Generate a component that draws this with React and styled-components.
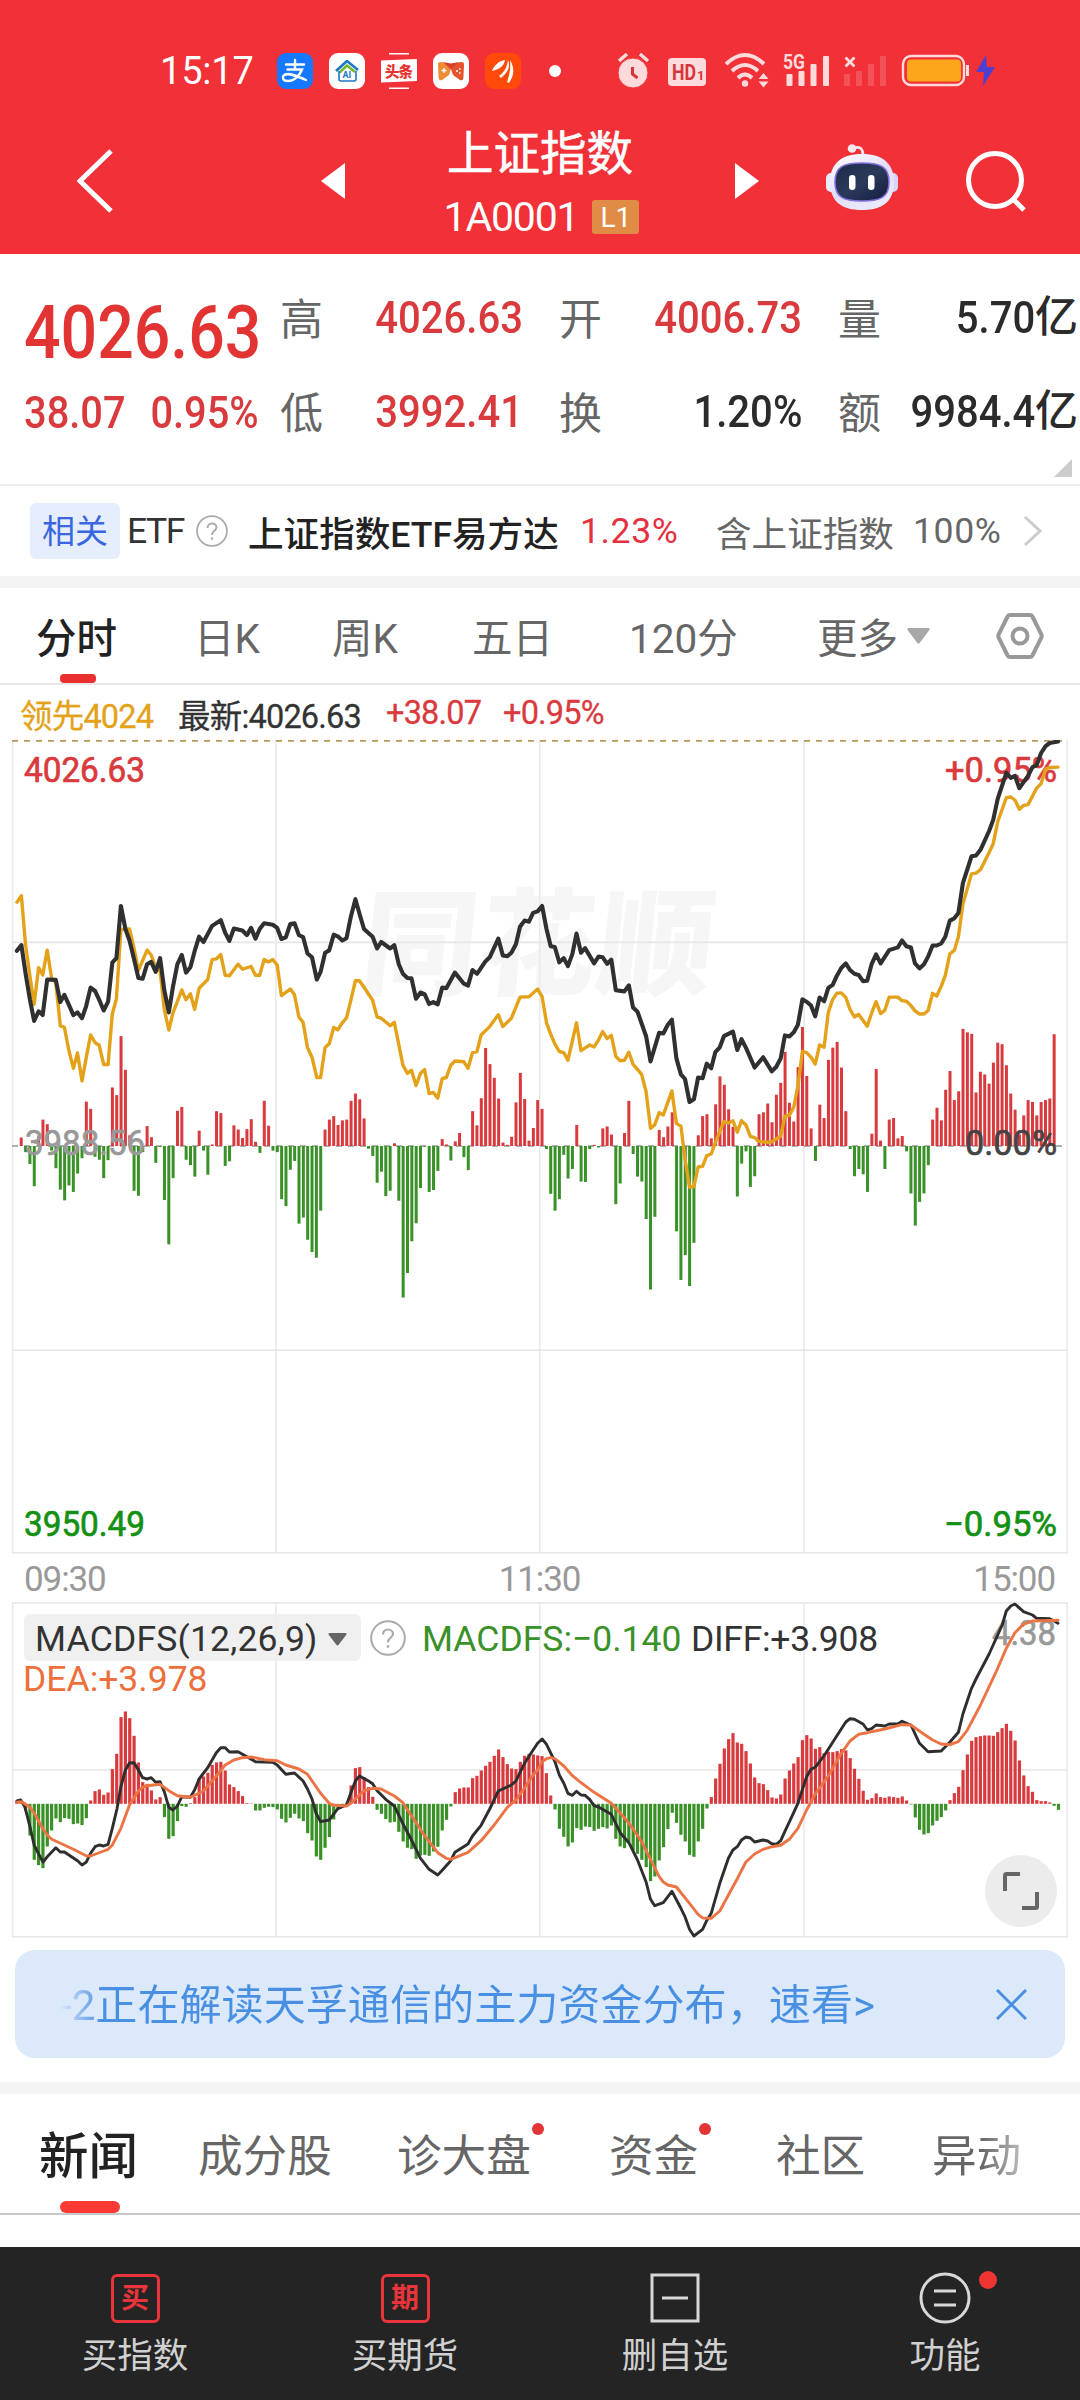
import styled, { createGlobalStyle, css } from "styled-components";

const GlobalStyle = createGlobalStyle`
  * {
    box-sizing: border-box;
  }
  body {
    margin: 0;
    background: #fff;
    font-family: Roboto, "Noto Sans CJK SC", sans-serif;
    color: #333;
  }
  svg {
    display: block;
    flex: none;
  }
`;

const RED = "#d93a3d";
const GREEN = "#3a9128";

const Screen = styled.div`
  width: 1080px;
  height: 2400px;
  display: flex;
  flex-direction: column;
  overflow: hidden;
  white-space: nowrap;
`;

/* ---------- header ---------- */

const Header = styled.header`
  height: 254px;
  background: #f13037;
  color: #fff;
`;

const StatusBar = styled.div`
  height: 108px;
  padding: 34px 0 0 160px;
  display: flex;
  align-items: center;
`;

const Clock = styled.span`
  width: 117px;
  font-size: 38px;
  letter-spacing: -0.2px;
`;

const AppIcons = styled.div`
  display: flex;
  align-items: center;
  gap: 16px;
  width: 341px;
`;

const TitleBar = styled.div`
  height: 146px;
  display: grid;
  grid-template-columns: 77px 243px 100px 240px 75px 90px 139px 116px;
  align-items: center;
`;

const TitleBlock = styled.div`
  display: flex;
  flex-direction: column;
  align-items: center;
  padding-top: 7px;
`;

const Title = styled.h1`
  margin: 0;
  font-size: 46.5px;
  font-weight: 400;
  line-height: 64px;
  -webkit-text-stroke: 0.6px #fff;
`;

const Code = styled.div`
  display: flex;
  align-items: center;
  gap: 14px;
  font-size: 41px;
  line-height: 62px;
  letter-spacing: -1.2px;
  padding-left: 3px;
`;

const Level = styled.span`
  width: 47px;
  height: 34px;
  border-radius: 3px;
  background: #e18c46;
  font-size: 28px;
  line-height: 35px;
  text-align: center;
  letter-spacing: 0;
`;

/* ---------- quote ---------- */

const Quote = styled.section`
  height: 232px;
  padding: 16px 0 0 24px;
  border-bottom: 2px solid #ececec;
  display: grid;
  grid-template-columns: 256px 243px 243px 242px;
  grid-template-rows: 94px 94px;
  align-items: center;
`;

const Price = styled.div`
  font-size: 74px;
  font-weight: 500;
  color: #e33434;
  padding-top: 30px;
  transform: scaleX(0.87);
  transform-origin: left;
`;

const Change = styled.div`
  display: flex;
  gap: 28px;
  font-size: 45px;
  color: ${RED};
  font-weight: 500;
  transform: scaleX(0.885);
  transform-origin: left;
  padding-top: 3px;
`;

const Stat = styled.div`
  display: flex;
  justify-content: space-between;
  align-items: center;
  margin-left: ${(props) => props.$shift}px;
  margin-right: -${(props) => props.$shift}px;
`;

const StatLabel = styled.span`
  font-size: 43px;
  color: #666;
  position: relative;
  top: -1px;
`;

const StatValue = styled.span`
  display: flex;
  align-items: center;
  font-size: 45px;
  font-weight: 500;
  padding-top: 1px;
  color: ${(props) => (props.$up ? RED : "#2b2b2b")};
`;

const Digits = styled.span`
  transform: scaleX(0.89);
  transform-origin: right;
`;

const Unit = styled.span`
  font-size: 43px;
  line-height: 53px;
  margin-right: 2px;
`;

const Corner = styled.div`
  grid-column: 1 / -1;
  width: 18px;
  height: 18px;
  margin-left: 1030px;
  margin-bottom: 6px;
  background: #ccc;
  clip-path: polygon(100% 0, 100% 100%, 0 100%);
`;

const Related = styled.section`
  height: 90px;
  padding-left: 30px;
  display: grid;
  grid-template-columns: 97px 69px 52px 332px 136px 197px 110px 30px;
  align-items: center;
  font-size: 35.6px;
  color: #666;
`;

const Tag = styled.span`
  width: 90px;
  height: 56px;
  border-radius: 6px;
  background: #e6eefd;
  color: #3a66e0;
  font-size: 33px;
  line-height: 57px;
  text-align: center;
`;

const RelatedText = styled.span`
  color: ${(props) => props.$color || "#666"};
  font-weight: ${(props) => props.$weight || 400};
  letter-spacing: ${(props) => props.$spacing || 0}px;
`;

const Band = styled.div`
  height: 12px;
  background: #f4f4f4;
  flex: none;
`;

/* ---------- tabs ---------- */

const Tabs = styled.nav`
  height: 97px;
  padding-left: 36px;
  border-bottom: 2px solid #e8e8e8;
  display: grid;
  grid-template-columns: 158px 138px 140px 157px 188px 179px auto;
  align-items: stretch;
`;

const Tab = styled.div`
  position: relative;
  display: flex;
  align-items: center;
  gap: 9px;
  font-size: 40.5px;
  color: ${(props) => (props.$active ? "#222" : "#666")};
  font-weight: ${(props) => (props.$active ? 500 : 400)};

  ${(props) =>
    props.$active &&
    css`
      &::after {
        content: "";
        position: absolute;
        left: 24px;
        bottom: 0;
        width: 36px;
        height: 9px;
        border-radius: 4px;
        background: #ea2f2f;
      }
    `}
`;

const Latest = styled.div`
  height: 55px;
  padding: 1px 0 0 20px;
  display: grid;
  grid-template-columns: 158px 208px 117px auto;
  align-items: center;
  font-size: 32.5px;
`;

const LatestItem = styled.span`
  color: ${(props) => props.$color};
  letter-spacing: -0.8px;
  -webkit-text-stroke: 0.3px ${(props) => props.$color};
`;

/* ---------- charts ---------- */

const ChartBox = styled.div`
  position: relative;
  height: ${(props) => props.$height}px;
  flex: none;
`;

const TimeAxis = styled.div`
  height: 44px;
  padding: 2px 25px 0 24px;
  display: flex;
  justify-content: space-between;
  align-items: center;
  font-size: 35px;
  letter-spacing: -1.1px;
  color: #999;
`;

const Indicators = styled.div`
  position: absolute;
  top: 14px;
  left: 24px;
  display: grid;
  grid-template-columns: 346px 52px 269px auto;
  align-items: center;
  height: 47px;
  font-size: 35.5px;
`;

const Picker = styled.div`
  width: 337px;
  height: 47px;
  padding: 3px 14px 0 11px;
  border-radius: 6px;
  background: rgba(236, 236, 236, 0.8);
  display: flex;
  justify-content: space-between;
  align-items: center;
  letter-spacing: 0.2px;
`;

const Reading = styled.span`
  color: ${(props) => props.$color};
  letter-spacing: ${(props) => props.$spacing}px;
  padding-top: 3px;
`;

const Dea = styled.div`
  position: absolute;
  top: 58px;
  left: 23px;
  font-size: 35.5px;
  letter-spacing: 0;
  color: #ec6f3c;
`;

const Expand = styled.button`
  position: absolute;
  left: 985px;
  top: 255px;
  width: 72px;
  height: 72px;
  padding: 0;
  border: none;
  border-radius: 50%;
  background: #ececec;
  display: flex;
  align-items: center;
  justify-content: center;
`;

/* ---------- banner and news ---------- */

const Banner = styled.div`
  height: 108px;
  margin: 10px 15px 24px;
  padding: 0 38px 0 45px;
  border-radius: 20px;
  background: #dbe9fb;
  display: flex;
  align-items: center;
  justify-content: space-between;
  flex: none;
`;

const BannerText = styled.span`
  font-size: 42.1px;
  line-height: 60px;
  padding-top: 4px;
  background: linear-gradient(90deg, #dbe9fb 0, #4a90e2 42px);
  background-clip: text;
  color: transparent;
`;

const NewsTabs = styled.nav`
  height: 121px;
  padding-left: 39px;
  border-bottom: 2px solid #c8c8c8;
  display: grid;
  grid-template-columns: 159px 199px 212px 167px 156px auto;
  flex: none;
`;

const NewsTab = styled.div`
  position: relative;
  display: flex;
  align-items: center;
  justify-self: start;
  padding-bottom: 2px;
  font-size: ${(props) => (props.$active ? 49.5 : 44.6)}px;
  font-weight: ${(props) => (props.$active ? 500 : 400)};
  color: ${(props) => (props.$active ? "#222" : "#666")};

  ${(props) =>
    props.$active &&
    css`
      &::after {
        content: "";
        position: absolute;
        left: 21px;
        bottom: 0;
        width: 60px;
        height: 12px;
        border-radius: 6px;
        background: #fc3a34;
      }
    `}

  ${(props) =>
    props.$fade &&
    css`
      background: linear-gradient(90deg, #666 55%, #bbb 100%);
      background-clip: text;
      color: transparent;
    `}
`;

const NewsDot = styled.i`
  position: absolute;
  right: -13px;
  top: 29px;
  width: 12px;
  height: 12px;
  border-radius: 50%;
  background: #e23434;
`;

const Spacer = styled.div`
  flex: 1;
`;

/* ---------- bottom bar ---------- */

const BottomBar = styled.footer`
  height: 153px;
  background: #242424;
  color: #d0d0d0;
  display: grid;
  grid-template-columns: repeat(4, 1fr);
  flex: none;
`;

const Action = styled.div`
  display: flex;
  flex-direction: column;
  align-items: center;
  padding-top: 24px;
  font-size: 35.5px;
  line-height: 52px;
`;

const ActionIcon = styled.div`
  position: relative;
  height: 54px;
  margin-bottom: 5px;
  display: flex;
  align-items: center;
`;

const StampIcon = styled.div`
  width: 49px;
  height: 49px;
  border: 3px solid #e8343a;
  border-radius: 6px;
  color: #e8343a;
  font-size: 28px;
  line-height: 43px;
  font-weight: 700;
  text-align: center;
`;

const ActionDot = styled.i`
  position: absolute;
  right: -26px;
  top: 0;
  width: 18px;
  height: 18px;
  border-radius: 50%;
  background: #f03434;
`;

/* ---------- data ---------- */

const FLOW = [
  0, 22, -16, -47, -105, 25, 69, 57, -12, -58, -114, -142, -103, -120, -72, -32, 116, 97, -28, -36,
  -84, -37, 153, 133, 287, 199, 28, -117, -130, -16, 52, 23, -44, -2, -141, -257, -84, 92, 102, -36,
  -50, -80, 40, -12, -75, 4, 91, 86, -52, -40, 54, 43, 21, 44, 70, 11, -18, 118, 53, -12,
  -16, -139, -157, -62, -39, -203, -187, -245, -277, -292, -169, 43, 69, 78, 55, 67, 69, 118, 137, 122,
  72, -7, -26, -96, -67, -131, -117, 7, -143, -396, -332, -249, -202, -110, -2, -120, -115, -65, 18, 4,
  -38, 12, 34, -29, -63, 91, 54, 125, 256, 214, 178, 124, 9, 3, 24, 114, 191, 123, 14, 47,
  120, 97, -8, -125, -169, -139, -23, -85, -60, 55, -93, -94, -8, 3, -4, 46, 51, 30, -152, -98,
  34, 118, -21, -80, -93, -191, -375, -185, 42, 23, 51, 88, -223, -350, -285, -366, -253, 28, 78, 83,
  20, 109, 182, 160, 96, 50, -132, -46, -14, -107, -79, 83, 88, 111, 62, 134, 165, 246, 113, 64,
  206, 311, 183, 46, -39, 108, 73, 225, 257, 272, 205, 91, -8, -79, -60, -74, -120, 32, 201, 14,
  -60, 69, 73, 20, 26, -14, -124, -208, -146, -124, -50, 69, 100, 67, 147, 196, 120, 143, 306, 297,
  293, 140, 194, 187, 163, 218, 270, 266, 211, 137, 95, 30, 80, 120, 115, 80, 115, 120, 124, 292,
];

const MACD = [
  8, 8, -20, -95, -168, -184, -193, -128, -80, -44, -55, -43, -45, -61, -59, -64, -43, 10, 38, 43,
  27, 34, 104, 150, 260, 277, 257, 204, 124, 65, 60, 40, 13, 20, -40, -105, -97, -52, -7, -9,
  2, 20, 76, 82, 93, 117, 124, 126, 100, 58, 50, 38, 23, 2, 1, -20, -20, -12, -9, -10,
  -17, -45, -56, -42, -30, -44, -52, -88, -110, -158, -168, -132, -100, -47, -14, -10, 3, 55, 107, 110,
  80, 50, 21, -18, -30, -46, -56, -54, -84, -113, -132, -136, -165, -155, -153, -156, -143, -129, -80, -48,
  -8, 35, 46, 49, 49, 77, 84, 100, 114, 126, 144, 163, 140, 119, 106, 104, 126, 144, 150, 148,
  145, 143, 92, 25, -17, -75, -99, -128, -116, -73, -78, -68, -70, -81, -75, -70, -74, -65, -105, -128,
  -133, -115, -140, -150, -168, -190, -232, -218, -170, -130, -76, -27, -57, -93, -113, -153, -159, -113, -75, -14,
  20, 76, 120, 166, 194, 212, 184, 180, 158, 121, 79, 62, 59, 41, 19, 16, 28, 76, 100, 121,
  140, 191, 206, 196, 165, 170, 152, 156, 155, 158, 164, 160, 137, 105, 75, 39, 12, 17, 31, 20,
  18, 22, 20, 18, 22, 10, -2, -41, -78, -92, -88, -65, -51, -40, -20, 11, 32, 51, 101, 148,
  189, 200, 203, 205, 205, 204, 215, 227, 240, 219, 190, 130, 85, 53, 36, 11, 8, 8, 4, -6,
  -18,
];

// each series is split into its morning and afternoon session
const INDEX = [
  "49,577 62,562 75,640 87,705 99,760 112,735 124,745 137,652 162,653 175,711 187,692 200,718 213,745 225,738 238,753 250,722 263,673 276,682 288,705 301,733 314,710 326,608 338,596 351,460 364,520 376,550 389,598 402,648 414,650 427,612 439,606 452,632 465,596 477,680 490,738 502,672 515,612 528,588 540,634 553,620 565,578 578,540 591,554 616,512 641,497 654,530 666,551 679,519 704,524 717,536 729,517 742,545 754,520 767,505 792,509 805,517 817,546 830,542 843,507 855,505 868,536 880,541 893,584 906,594 920,652 931,632 944,582 956,576 969,535 981,539 994,550 1006,544 1019,487 1032,442 1044,480 1057,520 1082,540 1095,571 1107,554 1133,571 1145,562 1158,612 1170,637 1183,648 1195,649 1208,702 1221,686 1233,690 1246,716 1258,711 1271,717 1284,673 1296,675 1321,634 1347,663 1359,668 1372,627 1385,637 1410,604 1422,594 1447,545 1460,589 1473,591 1485,582 1498,560 1510,514 1523,498 1536,501 1548,478 1561,474",
  "6,460 19,520 31,565 43,567 56,607 69,596 81,617 94,585 106,532 119,582 131,570 157,610 170,592 182,594 195,611 207,600 220,680 245,683 258,667 270,725 283,736 308,800 321,866 346,791 358,793 371,770 383,757 396,858 409,900 421,912 434,972 447,965 459,908 472,910 484,872 497,884 509,842 522,829 534,800 560,788 573,836 585,808 598,830 623,882 648,855 673,892 686,880 699,858 711,798 724,801 737,790 749,770 762,704 774,710 787,720 799,748 812,699 825,709 837,674 850,666 862,642 875,622 888,610 900,627 913,637 925,640 938,656 950,655 963,612 976,586 989,610 1014,575 1039,568 1051,550 1064,565 1077,568 1089,610 1102,623 1115,612 1127,592 1140,563 1152,563 1165,558 1177,540 1190,498 1203,492 1215,478 1228,400 1253,330 1266,328 1279,313 1304,264 1316,235 1329,180 1354,112 1367,125 1379,120 1392,152 1417,120 1430,97 1442,92 1455,60 1468,42 1480,34 1504,30",
];

const LEAD = [
  "49,450 62,433 74,560 87,645 99,717 112,621 124,640 137,575 150,650 162,660 175,773 187,777 200,838 213,884 225,844 238,917 250,858 263,797 276,817 288,824 301,874 314,874 326,742 338,702 351,521 376,520 389,570 402,628 427,575 439,588 452,620 465,630 477,730 490,784 502,740 528,679 540,705 553,689 565,730 578,675 603,652 616,600 628,598 641,587 654,641 666,642 691,612 704,625 729,618 742,641 754,641 767,600 780,606 792,600 805,614 817,694 843,677 855,692 868,750 880,764 893,830 906,855 920,908 931,908 944,830 956,820 969,777 981,783 994,765 1006,752 1019,706 1032,655 1044,655 1057,672 1082,706 1095,750 1107,753 1133,773 1145,764 1158,822 1170,876 1183,897 1195,889 1208,929 1221,897 1233,887 1246,950 1258,947 1271,962 1284,911 1296,908 1309,876 1321,865 1347,867 1359,884 1372,843 1385,840 1397,797 1422,775 1447,744 1460,775 1485,753 1510,698 1536,697 1561,677",
  "6,697 19,765 31,795 43,820 56,840 69,843 81,863 106,765 119,838 144,823 157,828 170,810 182,788 195,806 207,798 220,853 233,864 245,863 258,842 270,873 295,900 308,945 321,1041 333,1032 346,1000 358,1006 383,943 396,1028 409,1035 421,1120 434,1195 447,1193 459,1142 472,1140 484,1112 497,1108 509,1078 534,1023 547,1027 560,1021 573,1051 585,1021 598,1032 611,1062 623,1065 635,1075 661,1077 673,1076 699,1061 711,1009 724,1007 737,985 749,930 762,840 774,843 787,855 799,873 812,823 825,829 837,738 850,704 862,688 875,687 888,699 900,730 913,750 925,743 950,774 963,740 976,710 989,741 1001,733 1014,698 1039,698 1051,707 1064,709 1077,720 1089,734 1102,742 1115,742 1127,733 1140,688 1152,695 1165,670 1177,641 1190,585 1203,576 1215,540 1228,455 1253,376 1266,374 1279,365 1304,320 1316,297 1329,240 1354,177 1367,175 1379,183 1392,207 1404,197 1417,195 1442,152 1455,140 1468,102 1480,98 1504,97",
];

const DIFF = [
  "49,633 60,630 72,650 87,710 99,765 112,792 125,816 140,797 162,773 175,786 187,786 200,795 225,812 238,825 250,817 263,790 276,770 288,765 301,768 314,763 326,715 340,655 351,590 364,540 376,519 389,518 402,540 414,563 427,567 439,563 452,577 465,575 477,605 490,652 502,660 515,648 528,620 553,622 565,600 578,567 603,533 628,488 641,473 654,473 666,486 691,485 717,500 742,515 767,516 792,517 805,525 830,553 855,549 880,573 893,597 906,627 918,670 931,695 956,690 981,656 1006,645 1019,608 1032,573 1044,558 1070,573 1082,581 1095,602 1120,628 1145,648 1170,701 1195,750 1221,805 1246,838 1271,855 1284,841 1309,812 1321,787 1359,762 1372,738 1397,706 1422,657 1447,603 1485,585 1498,573 1523,520 1548,480 1561,460",
  "6,447 19,463 43,514 56,555 69,580 81,610 94,616 106,604 119,615 131,616 144,628 157,647 170,651 207,673 233,728 258,758 283,810 308,876 321,928 333,947 358,938 383,904 409,955 421,980 434,1018 447,1038 472,1018 484,992 497,970 522,880 547,805 560,780 573,770 585,750 598,741 611,744 623,756 648,750 661,753 673,761 686,763 699,752 711,724 737,667 749,640 774,560 787,538 799,532 825,497 862,437 888,396 900,386 913,388 938,402 951,420 963,416 976,405 1001,408 1014,402 1039,402 1051,394 1077,405 1102,460 1127,485 1165,483 1190,457 1215,427 1228,372 1253,295 1266,267 1304,192 1329,135 1342,105 1354,63 1367,48 1379,42 1404,65 1430,75 1442,85 1480,86 1492,92 1504,100",
];

const DEA = [
  "49,637 62,635 74,643 87,652 100,670 125,717 137,735 150,748 213,778 250,797 263,798 301,783 314,778 326,765 351,715 376,645 402,603 414,592 427,587 465,583 490,602 515,617 553,622 591,603 628,558 654,525 679,510 704,503 730,501 767,509 805,512 830,525 868,537 893,553 931,610 956,640 969,646 1006,648 1019,640 1057,602 1082,595 1107,597 1145,618 1170,638 1195,677 1233,737 1271,788 1296,805 1309,808 1359,787 1397,752 1435,705 1473,652 1498,630 1523,594 1548,555 1561,540",
  "6,515 19,506 31,503 43,506 69,528 94,557 119,578 157,607 207,640 245,683 270,716 295,755 321,808 346,860 358,876 371,885 396,891 434,940 459,973 472,984 497,985 522,963 547,915 573,866 598,816 623,792 648,778 673,770 699,766 724,748 749,715 774,660 799,612 837,558 875,490 900,453 925,433 951,428 1001,417 1051,404 1077,405 1115,433 1140,450 1165,462 1190,464 1215,455 1240,422 1279,345 1329,235 1354,175 1379,128 1404,103 1430,93 1504,91",
];

const SESSION = 1568;

const toPoints = (series, scaleY) =>
  series
    .flatMap((part, s) =>
      part.split(" ").map((pair) => {
        const [x, y] = pair.split(",").map(Number);
        return `${((x + s * SESSION) / 2.9037).toFixed(1)},${(y / scaleY - 10).toFixed(1)}`;
      })
    )
    .join(" ");

const Line = ({ series, scaleY, color, width }) => (
  <polyline
    points={toPoints(series, scaleY)}
    fill="none"
    stroke={color}
    strokeWidth={width}
    strokeLinejoin="round"
    strokeLinecap="round"
  />
);

const Bars = ({ data, base, scaleY, width }) =>
  data.map((v, i) => (
    <rect
      key={i}
      x={16.9 + i * 4.34 - width / 2}
      y={v > 0 ? base - v / scaleY : base}
      width={width}
      height={Math.abs(v) / scaleY}
      fill={v > 0 ? RED : GREEN}
    />
  ));

const Label = ({ x, y, w, color, children, opacity }) => (
  <text
    x={x}
    y={y}
    textLength={w}
    lengthAdjust="spacingAndGlyphs"
    fontSize="35"
    fill={color}
    stroke={color}
    strokeWidth="0.7"
    opacity={opacity}
  >
    {children}
  </text>
);

const GRID_X = [12.7, 275.8, 539.7, 804, 1067];

const PriceChart = () => (
  <ChartBox $height={816}>
    <svg width="1080" height="816">
      <text
        transform="translate(358 246) skewX(-6)"
        fontSize="116"
        fontWeight="900"
        fill="#f6f6f6"
        textLength="352"
      >
        同花顺
      </text>
      {GRID_X.map((x) => (
        <line key={x} x1={x} x2={x} y1="0" y2="813" stroke="#e9e9e9" strokeWidth="1.6" />
      ))}
      {[202.4, 610.3, 812.7].map((y) => (
        <line key={y} x1="12" x2="1068" y1={y} y2={y} stroke="#e6e6e6" strokeWidth="1.6" />
      ))}
      <line x1="12" x2="1067" y1="0.9" y2="0.9" stroke="#b8975a" strokeWidth="1.8" strokeDasharray="6 6" />
      <line x1="12" x2="1062" y1="406" y2="406" stroke="#999" strokeWidth="1.4" strokeDasharray="6 6" />
      <Bars data={FLOW} base={406} scaleY={2.613} width={3} />
      <Label x={24} y={41.7} w={121} color={RED}>4026.63</Label>
      <Label x={945} y={41.7} w={112} color={RED}>+0.95%</Label>
      <Label x={25} y={414.7} w={120} color="#999">3988.56</Label>
      <Label x={965} y={414.7} w={92} color="#444">0.00%</Label>
      <Label x={24} y={795.7} w={121} color="#149014">3950.49</Label>
      <Label x={944} y={795.7} w={113} color="#149014">−0.95%</Label>
      <Line series={LEAD} scaleY={2.613} color="#e3a21a" width={3.4} />
      <Line series={INDEX} scaleY={2.613} color="#303030" width={4.1} />
    </svg>
  </ChartBox>
);

const Help = ({ size }) => (
  <svg width={size} height={size} viewBox="0 0 36 36" fill="none" stroke="#aaa" strokeWidth="2">
    <circle cx="18" cy="18" r="16.8" />
    <path d="M13 14.5c0-3 2.2-5 5-5s5 1.900 5 4.500c0 3.600-5 4-5 8v.5" strokeWidth="2.2" />
    <circle cx="18" cy="26.500" r="0.800" fill="#aaa" strokeWidth="1.200" />
  </svg>
);

const Down = ({ width, height, color }) => (
  <svg width={width} height={height} viewBox="0 0 20 14">
    <path d="M1.500 0h17c1 0 1.600 1 1 1.800L11 13c-.5.700-1.500.700-2 0L.5 1.800C-.1 1 .5 0 1.500 0Z" fill={color} />
  </svg>
);

const MacdChart = () => (
  <ChartBox $height={340}>
    <svg width="1080" height="340">
      {GRID_X.map((x) => (
        <line key={x} x1={x} x2={x} y1="3" y2="337" stroke="#e9e9e9" strokeWidth="1.6" />
      ))}
      {[3, 170, 336.7].map((y) => (
        <line key={y} x1="12" x2="1068" y1={y} y2={y} stroke="#e6e6e6" strokeWidth="1.6" />
      ))}
      <Bars data={MACD} base={203.8} scaleY={3} width={3.2} />
      <Label x={992} y={45} w={64} color="#999">4.38</Label>
      <Line series={DIFF} scaleY={3} color="#2e2e2e" width={2.9} />
      <Line series={DEA} scaleY={3} color="#ec7444" width={2.9} />
    </svg>
    <Indicators>
      <Picker>
        MACDFS(12,26,9)
        <Down width={19} height={13} color="#666" />
      </Picker>
      <Help size={36} />
      <Reading $color={GREEN} $spacing={0}>MACDFS:−0.140</Reading>
      <Reading $color="#333" $spacing={-0.3}>DIFF:+3.908</Reading>
    </Indicators>
    <Dea>DEA:+3.978</Dea>
    <Expand>
      <svg width="36" height="38" fill="none" stroke="#666" strokeWidth="4">
        <path d="M2 19V3.500Q2 2 3.500 2H17M34 20V34.500Q34 36 32.500 36H19" />
      </svg>
    </Expand>
  </ChartBox>
);

/* ---------- status bar icons ---------- */

const AppIcon = ({ color, children }) => (
  <svg width="36" height="36" viewBox="0 0 36 36">
    <rect width="36" height="36" rx="9" fill={color} />
    {children}
  </svg>
);

const StatusApps = () => (
  <AppIcons>
    <AppIcon color="#1677ff">
      <g fill="none" stroke="#fff" strokeWidth="2.400" strokeLinecap="round">
        <path d="M9 11.500h18M18 7v9M10.500 16.500h14.500c-2 5-7 11.500-14 11.500-5 0-6-3-4.500-5.200 3-4 11-1 22.500 4.200" />
      </g>
    </AppIcon>
    <AppIcon color="#fff">
      <g fill="none" strokeLinejoin="round">
        <path d="M7 18 18 8l11 9" stroke="#1b78c8" strokeWidth="2.600" />
        <path d="M10 20 18 12.500l8 6.500" stroke="#76b82a" strokeWidth="2.600" />
        <path d="M10 18v8q0 2 2 2h13q2 0 2-2v-8" stroke="#1b78c8" strokeWidth="1.600" />
      </g>
      <text x="13.500" y="25" fontSize="9" fontWeight="700" fill="#1b78c8">AI</text>
    </AppIcon>
    <svg width="36" height="36" viewBox="0 0 36 36">
      <path d="M8 .8h20M8 35.200h20" stroke="#fff" strokeWidth="1.400" />
      <path d="M0 7.500 36 6v22L0 29.500Z" fill="#fff" />
      <text x="4" y="23.500" fontSize="14.500" fontWeight="900" fill="#e8322f" textLength="28">头条</text>
    </svg>
    <AppIcon color="#fff">
      <path d="M5 12q-.2-3.500 3-3l8 2 2 5-2 6-7 5q-3 1-3.400-2Z" fill="#f08a35" />
      <path d="M31 12q.2-3.500-3-3l-8 2-2 5 2 6 7 5q3 1 3.400-2Z" fill="#e5532f" />
      <path d="m10 9 8 7.500L26 9l-8 1.500Z" fill="#d8402c" />
      <path d="M12 27q6-7 12 0Z" fill="#fff" />
      <path d="M8.500 17.500h5M11 15v5" stroke="#fff" strokeWidth="1.400" />
      <path d="M23 18h2M26 16h1.500M26 20h1.500" stroke="#fff" strokeWidth="1.400" />
    </AppIcon>
    <AppIcon color="#ff4a0a">
      <g fill="#fff">
        <path d="M7 18c2-6 7-10 13-11-1 6-5 9-13 11Z" />
        <path d="M14 23c5-4 8-8 9-16 3 7-1 13-7 18Z" />
        <path d="M22 29c2-6 4-13 3-22 5 8 4 16-1 23Z" />
      </g>
    </AppIcon>
    <svg width="45" height="36">
      <circle cx="18" cy="18" r="6" fill="#fff" />
    </svg>
  </AppIcons>
);

const PINK = "#ffdadb";

const SystemIcons = () => (
  <svg width="400" height="48" viewBox="0 -6 400 48">
    <g fill={PINK}>
      <circle cx="15" cy="20" r="15" />
      <path d="m1 8 8-7M22 1l8 7" stroke={PINK} strokeWidth="3.500" />
      <circle cx="15" cy="20" r="15" stroke="#f13037" strokeWidth="1" />
      <path d="M14.500 14v7l5 4" fill="none" stroke="#d5363c" strokeWidth="3" />
      <rect x="50" y="5" width="38" height="28" rx="4" />
    </g>
    <text x="54" y="27" fontSize="22" fontWeight="700" fill="#d5363c" textLength="24" lengthAdjust="spacingAndGlyphs">HD</text>
    <text x="79" y="27" fontSize="13" fontWeight="700" fill="#d5363c">1</text>
    <g fill="none" stroke={PINK} strokeWidth="4">
      <path d="M108 11q19-18 38 0" />
      <path d="M114 18q13-12 26 0" />
      <path d="M120 25q7-7 14 0" />
    </g>
    <g fill={PINK}>
      <circle cx="127" cy="30.500" r="3.200" />
      <path d="m145.500 20 5 6h-10ZM145.500 34.500l5-6h-10Z" />
      <rect x="168.500" y="21" width="6" height="12" rx="1" />
      <rect x="180.500" y="18" width="6" height="15" rx="1" />
      <rect x="192.500" y="11" width="6" height="22" rx="1" />
      <rect x="205" y="3" width="6" height="30" rx="1" />
      <g opacity="0.2">
        <rect x="226" y="21" width="6" height="12" rx="1" />
        <rect x="238" y="18" width="6" height="15" rx="1" />
        <rect x="250" y="11" width="6" height="22" rx="1" />
        <rect x="262" y="3" width="6" height="30" rx="1" />
      </g>
    </g>
    <text x="165" y="15.500" fontSize="20" fontWeight="700" fill={PINK} textLength="22" lengthAdjust="spacingAndGlyphs">5G</text>
    <path d="m227.500 4.500 9 9M236.500 4.500l-9 9" stroke={PINK} strokeWidth="2.800" />
    <rect x="285" y="3" width="61" height="29" rx="8" fill="none" stroke={PINK} strokeWidth="2.400" />
    <rect x="289" y="6.500" width="54" height="22" rx="4" fill="#fda51b" />
    <path d="M349.500 12v11" stroke={PINK} strokeWidth="3" />
    <path d="m368 2-10 17h8l-1 14 12-19h-8Z" fill="#5140cf" />
  </svg>
);

const Robot = () => (
  <svg width="74" height="74" viewBox="0 2 74 74">
    <defs>
      <linearGradient id="shell" x1="0" y1="0" x2="0.6" y2="1">
        <stop offset="0" stopColor="#fff" />
        <stop offset="0.6" stopColor="#e3dcfa" />
        <stop offset="1" stopColor="#e9ebfb" />
      </linearGradient>
      <linearGradient id="visor" x1="0" y1="0" x2="1" y2="1">
        <stop offset="0" stopColor="#1c2a48" />
        <stop offset="0.5" stopColor="#2b3a5a" />
        <stop offset="1" stopColor="#141b3f" />
      </linearGradient>
    </defs>
    <path d="M28 6c7-2 10 0 10 8" fill="none" stroke="#f5e6ef" strokeWidth="2.800" />
    <circle cx="27" cy="6.500" r="4.300" fill="#f9e8ee" />
    <rect x="1" y="31" width="12" height="19" rx="5" fill="#ecebfb" />
    <rect x="61" y="31" width="12" height="19" rx="5" fill="#d9d5f8" />
    <path d="M37 12c21 0 32 10 32 28 0 20-12 28-32 28S5 60 5 40c0-18 11-28 32-28Z" fill="url(#shell)" />
    <path d="M37 21c19 0 27 4 27 19s-8 19-27 19-27-4-27-19 8-19 27-19Z" fill="url(#visor)" stroke="#7f6fd8" strokeWidth="1.600" />
    <rect x="24" y="33" width="6.500" height="15" rx="3.200" fill="#fff" />
    <rect x="43" y="33" width="6.500" height="15" rx="3.200" fill="#fff" />
  </svg>
);

const App = () => (
  <Screen>
    <GlobalStyle />
    <Header>
      <StatusBar>
        <Clock>15:17</Clock>
        <StatusApps />
        <SystemIcons />
      </StatusBar>
      <TitleBar>
        <span />
        <svg width="36" height="64" fill="none" stroke="#fff" strokeWidth="5">
          <path d="M34 2 3 32l31 30" />
        </svg>
        <svg width="26" height="38">
          <path d="M25 1v36L1 19Z" fill="#fff" />
        </svg>
        <TitleBlock>
          <Title>上证指数</Title>
          <Code>
            1A0001 <Level>L1</Level>
          </Code>
        </TitleBlock>
        <span />
        <svg width="26" height="38">
          <path d="M0 1v36l24-18Z" fill="#fff" />
        </svg>
        <Robot />
        <svg width="62" height="62" fill="none" stroke="#fff" strokeWidth="5">
          <circle cx="31" cy="30" r="26.500" />
          <path d="m49 49 11 11" />
        </svg>
      </TitleBar>
    </Header>

    <Quote>
      <Price>4026.63</Price>
      <Stat $shift={0}>
        <StatLabel>高</StatLabel>
        <StatValue $up>
          <Digits>4026.63</Digits>
        </StatValue>
      </Stat>
      <Stat $shift={36}>
        <StatLabel>开</StatLabel>
        <StatValue $up>
          <Digits>4006.73</Digits>
        </StatValue>
      </Stat>
      <Stat $shift={72}>
        <StatLabel>量</StatLabel>
        <StatValue>
          <Digits>5.70</Digits>
          <Unit>亿</Unit>
        </StatValue>
      </Stat>
      <Change>
        <span>38.07</span>
        <span>0.95%</span>
      </Change>
      <Stat $shift={0}>
        <StatLabel>低</StatLabel>
        <StatValue $up>
          <Digits>3992.41</Digits>
        </StatValue>
      </Stat>
      <Stat $shift={36}>
        <StatLabel>换</StatLabel>
        <StatValue>
          <Digits>1.20%</Digits>
        </StatValue>
      </Stat>
      <Stat $shift={72}>
        <StatLabel>额</StatLabel>
        <StatValue>
          <Digits>9984.4</Digits>
          <Unit>亿</Unit>
        </StatValue>
      </Stat>
      <Corner />
    </Quote>

    <Related>
      <Tag>相关</Tag>
      <RelatedText $color="#333" $spacing={-1.5}>ETF</RelatedText>
      <Help size={32} />
      <RelatedText $color="#222" $weight={500}>上证指数ETF易方达</RelatedText>
      <RelatedText $color="#e5303f" $spacing={0.6}>1.23%</RelatedText>
      <RelatedText>含上证指数</RelatedText>
      <RelatedText $spacing={0.6}>100%</RelatedText>
      <svg width="20" height="32" fill="none" stroke="#ccc" strokeWidth="3">
        <path d="m2 2 15 14L2 30" />
      </svg>
    </Related>
    <Band />

    <Tabs>
      <Tab $active>分时</Tab>
      <Tab>日K</Tab>
      <Tab>周K</Tab>
      <Tab>五日</Tab>
      <Tab>120分</Tab>
      <Tab>
        更多
        <Down width={23} height={18} color="#a8a8a8" />
      </Tab>
      <Tab>
        <svg width="48" height="46" fill="none" stroke="#999" strokeWidth="4">
          <path d="M14 2h20q1.500 0 2.300 1.300l9 18q.8 1.700 0 3.400l-9 18Q35.500 44 34 44H14q-1.500 0-2.300-1.300l-9-18q-.8-1.700 0-3.400l9-18Q12.500 2 14 2Z" />
          <circle cx="24" cy="23" r="7.500" />
        </svg>
      </Tab>
    </Tabs>

    <Latest>
      <LatestItem $color="#e3a21a">领先4024</LatestItem>
      <LatestItem $color="#333">最新:4026.63</LatestItem>
      <LatestItem $color={RED}>+38.07</LatestItem>
      <LatestItem $color={RED}>+0.95%</LatestItem>
    </Latest>

    <PriceChart />
    <TimeAxis>
      <span>09:30</span>
      <span>11:30</span>
      <span>15:00</span>
    </TimeAxis>
    <MacdChart />

    <Banner>
      <BannerText>-2正在解读天孚通信的主力资金分布，速看&gt;</BannerText>
      <svg width="31" height="31" stroke="#4a90e2" strokeWidth="3">
        <path d="m1 1 29 29M30 1 1 30" />
      </svg>
    </Banner>
    <Band />

    <NewsTabs>
      <NewsTab $active>新闻</NewsTab>
      <NewsTab>成分股</NewsTab>
      <NewsTab>
        诊大盘
        <NewsDot />
      </NewsTab>
      <NewsTab>
        资金
        <NewsDot />
      </NewsTab>
      <NewsTab>社区</NewsTab>
      <NewsTab $fade>异动</NewsTab>
    </NewsTabs>
    <Spacer />

    <BottomBar>
      <Action>
        <ActionIcon>
          <StampIcon>买</StampIcon>
        </ActionIcon>
        买指数
      </Action>
      <Action>
        <ActionIcon>
          <StampIcon>期</StampIcon>
        </ActionIcon>
        买期货
      </Action>
      <Action>
        <ActionIcon>
          <svg width="50" height="50" fill="none" stroke="#d8d8d8" strokeWidth="3">
            <path d="M2 2h46v46H2ZM12 25h26" />
          </svg>
        </ActionIcon>
        删自选
      </Action>
      <Action>
        <ActionIcon>
          <svg width="52" height="52" fill="none" stroke="#d8d8d8" strokeWidth="3">
            <circle cx="26" cy="26" r="24" />
            <path d="M15 19h22M15 33h22" />
          </svg>
          <ActionDot />
        </ActionIcon>
        功能
      </Action>
    </BottomBar>
  </Screen>
);

export default App;
